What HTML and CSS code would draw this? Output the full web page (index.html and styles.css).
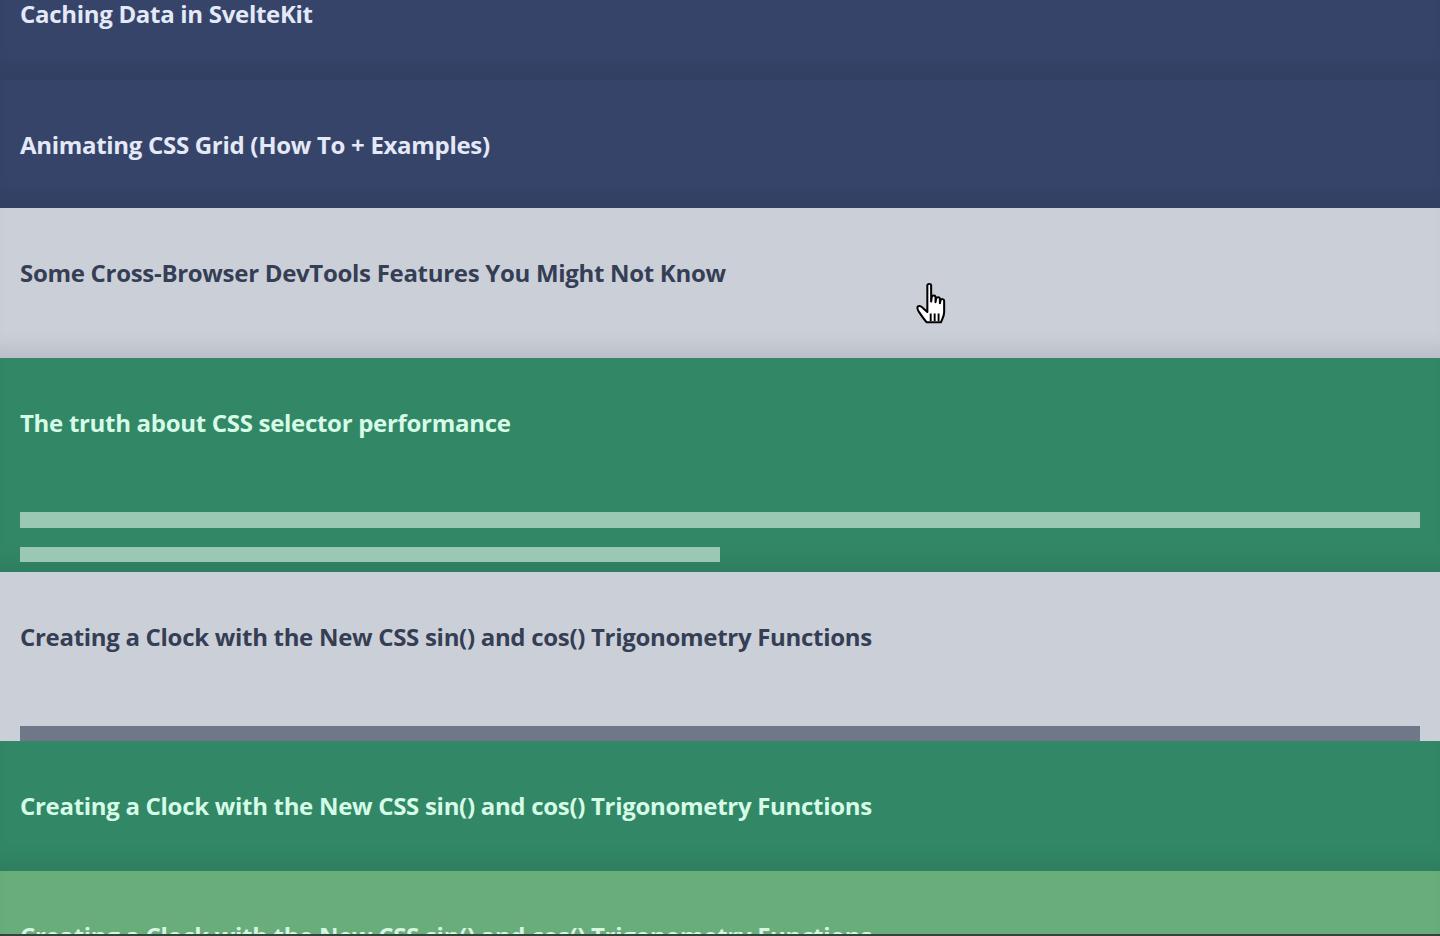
FILE: index.html
```html
<!DOCTYPE html>
<html lang="en">
<head>
<meta charset="utf-8">
<title>Articles</title>
<link rel="stylesheet" href="styles.css">
</head>
<body>
<main class="list">
  <article class="item item--blue item--h131">
    <h2 class="title">Caching Data in SvelteKit</h2>
  </article>
  <article class="item item--blue item--h128">
    <h2 class="title">Animating CSS Grid (How To + Examples)</h2>
  </article>
  <article class="item item--gray item--h150">
    <h2 class="title">Some Cross-Browser DevTools Features You Might Not Know</h2>
  </article>
  <article class="item item--green item--open">
    <h2 class="title">The truth about CSS selector performance</h2>
    <div class="lines">
      <div class="line line--full"></div>
      <div class="line line--half"></div>
    </div>
  </article>
  <article class="item item--gray item--opening">
    <h2 class="title">Creating a Clock with the New CSS sin() and cos() Trigonometry Functions</h2>
    <div class="lines lines--gray">
      <div class="line line--full"></div>
    </div>
  </article>
  <article class="item item--green item--h130">
    <h2 class="title">Creating a Clock with the New CSS sin() and cos() Trigonometry Functions</h2>
  </article>
  <article class="item item--lightgreen item--h130">
    <h2 class="title">Creating a Clock with the New CSS sin() and cos() Trigonometry Functions</h2>
  </article>
</main>
<svg class="cursor" width="34" height="38" viewBox="0 0 23 26" aria-hidden="true">
  <path d="M9 3.5c0-1.6 2.6-1.6 2.6 0V15l0.4-3.2c0.4-1.6 2.6-1.4 2.6 0.2v3.5l0.4-2.6c0.4-1.5 2.6-1.3 2.6 0.3v3l0.4-2c0.4-1.4 2.5-1.2 2.5 0.4v8.2c0 3-1.6 5.200-2.2 7.200H8.6C7 28.2 5.2 25.5 3.6 23 2.6 21.4 1.6 19.6 2.5 18.600c0.9-1 2.4-0.2 3.6 1.2L9 22.600Z" fill="#fff" stroke="#000" stroke-width="1.4" stroke-linejoin="round" transform="translate(0 -5) scale(1 0.95)"/>
  <path d="M11.3 17.5v5M14 17.5v5M16.7 17.5v5" stroke="#000" stroke-width="1.3"/>
</svg>
</body>
</html>
```
FILE: styles.css
```css
html, body {
  margin: 0;
  padding: 0;
}
body {
  height: 936px;
  overflow: hidden;
  background: #cbd0d8;
  font-family: "Open Sans", "Noto Sans", sans-serif;
  position: relative;
}
body::after {
  content: "";
  position: absolute;
  left: 0;
  right: 0;
  bottom: 0;
  height: 2px;
  background: #34443c;
}
.list {
  display: flex;
  flex-direction: column;
  margin-top: -51px;
}
.item {
  box-sizing: border-box;
  padding: 50px 20px 0;
  display: flex;
  flex-direction: column;
  flex-shrink: 0;
  box-shadow: inset 0 -22px 18px -12px rgba(20, 30, 40, 0.10);
}
.title {
  margin: 0;
  font-size: 24px;
  line-height: 30px;
  font-weight: 700;
  letter-spacing: -0.3px;
}
.item--blue { background: #36446a; color: #e4e9f7; }
.item--gray { background: #cbd0d8; color: #353e55; }
.item--green { background: #328866; color: #d6fbe6; }
.item--lightgreen { background: #68ad7a; color: #d8f5e2; }
.item--h131 { height: 131px; }
.item--h128 { height: 128px; }
.item--h150 { height: 150px; }
.item--h130 { height: 130px; }
.item--open { height: 214px; }
.item--opening { height: 169px; box-shadow: none; }

.lines {
  display: flex;
  flex-direction: column;
  gap: 19px;
  margin-top: 74px;
}
.line {
  height: 16px;
  background: #9ac8b5;
}
.line--full { width: 100%; }
.line--half { width: 700px; height: 15px; }
.lines--gray { margin-top: 74px; }
.lines--gray .line { background: #6f7789; height: 15px; }

.cursor {
  position: absolute;
  left: 914px;
  top: 288px;
  overflow: visible;
}
```
